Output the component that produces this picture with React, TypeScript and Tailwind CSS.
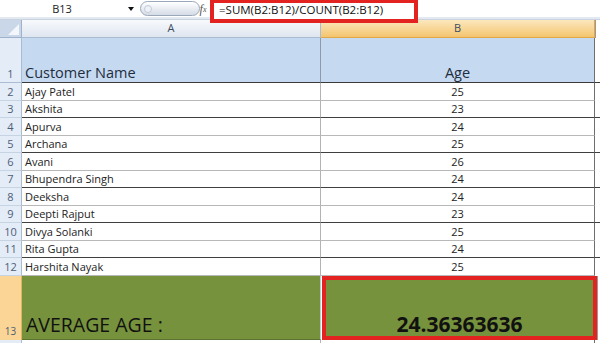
import React from "react";

const data: [string, number][] = [
  ["Ajay Patel", 25],
  ["Akshita", 23],
  ["Apurva", 24],
  ["Archana", 25],
  ["Avani", 26],
  ["Bhupendra Singh", 24],
  ["Deeksha", 24],
  ["Deepti Rajput", 23],
  ["Divya Solanki", 25],
  ["Rita Gupta", 24],
  ["Harshita Nayak", 25],
];

export default function App() {
  return (
    <div className="w-[600px] h-[343px] overflow-hidden bg-white text-black font-['Open_Sans',sans-serif]">
      {/* Formula bar */}
      <div className="flex h-[17px] items-start bg-white">
        <div className="w-[124px] h-[17px] flex items-center justify-center text-[11px] leading-none text-[#222]">
          B13
        </div>
        <div className="w-[14px] h-[17px] flex items-center justify-center">
          <svg width="6" height="4" viewBox="0 0 6 4">
            <path d="M0 0 L6 0 L3 4 Z" fill="#111" />
          </svg>
        </div>
        <div className="ml-[2px] mt-[1px] w-[60px] h-[15px] rounded-full border border-[#9aa8ba] bg-gradient-to-b from-[#ffffff] to-[#d5dce6] flex items-center pl-[3px]">
          <div className="w-[8px] h-[8px] rounded-full border border-[#c3ccd8] bg-[#eef2f7]" />
        </div>
        <div className="-ml-[3px] w-[12px] h-[17px] flex items-center justify-center font-['Liberation_Serif',serif] italic text-[#555] text-[12px] leading-none">
          f<span className="text-[8px] mt-[3px]">x</span>
        </div>
        <div className="relative z-10 ml-[1px] w-[208px] h-[23px] border-[4px] border-t-[3px] border-[#e2231f] bg-white text-[11.5px] leading-[14px] pl-[5px] text-[#111] whitespace-nowrap">
          =SUM(B2:B12)/COUNT(B2:B12)
        </div>
      </div>
      <div className="h-[3px] bg-[#e3e9f1] border-b border-[#c9d3df]" />

      {/* Column headers */}
      <div className="grid grid-cols-[22px_299px_274px_5px] h-[18px]">
        <div className="bg-[#c9d7e9] border-r border-b border-[#9eb2c9] flex items-end justify-end pr-[2px] pb-[2px]">
          <svg width="11" height="11" viewBox="0 0 11 11">
            <path d="M11 0 L11 11 L0 11 Z" fill="#f3f6fa" />
          </svg>
        </div>
        <div className="bg-gradient-to-b from-[#f7f9fc] to-[#dfe6f0] border-r border-b border-[#a9bcd2] flex items-center justify-center text-[11px] text-[#3d4c60]">
          A
        </div>
        <div className="bg-gradient-to-b from-[#fbe7bd] to-[#f4c56d] border-r border-b border-[#e2a848] flex items-center justify-center text-[11px] text-[#3d4c60]">
          B
        </div>
        <div className="bg-white border-l border-[#9a9a9a]" />
      </div>

      {/* Row 1 */}
      <div className="grid grid-cols-[22px_299px_274px_5px] h-[45px]">
        <div className="bg-[#e4ecf7] border-r border-b border-[#a9bcd2] flex items-end justify-center text-[11px] leading-[16px] text-[#4d5e77]">
          1
        </div>
        <div className="bg-[#c5d9f1] border-r border-b border-r-[#8e9aa8] border-b-[#3a3a3a] flex items-end pl-[3px] text-[14.5px] leading-[18px] text-[#1f2d3d]">
          Customer Name
        </div>
        <div className="bg-[#c5d9f1] border-r border-b border-r-[#6f6f6f] border-b-[#3a3a3a] flex items-end justify-center text-[14.5px] leading-[18px] text-[#1f2d3d]">
          Age
        </div>
        <div className="bg-white border-b border-[#3a3a3a]" />
      </div>

      {/* Data rows */}
      {data.map(([name, age], i) => {
        const n = i + 2;
        const dark = n % 2 === 1;
        return (
          <div
            key={n}
            className={`grid grid-cols-[22px_299px_274px_5px] ${i % 2 === 0 ? "h-[18px]" : "h-[17px]"}`}
          >
            <div className="bg-[#e4ecf7] border-r border-b border-r-[#a9bcd2] border-b-[#c6d3e2] flex items-end justify-center text-[11px] leading-[16px] text-[#4d5e77]">
              {n}
            </div>
            <div
              className={`bg-white border-r border-b border-r-[#b3b3b3] flex items-end pl-[3px] text-[11px] leading-[16px] text-[#222] ${dark ? "border-b-[#3f3f3f]" : "border-b-[#b8b8b8]"}`}
            >
              {name}
            </div>
            <div
              className={`bg-white border-r border-b border-r-[#6f6f6f] flex items-end justify-center text-[11px] leading-[16px] text-[#222] ${dark ? "border-b-[#3f3f3f]" : "border-b-[#b8b8b8]"}`}
            >
              {age}
            </div>
            <div className={`bg-white border-b ${dark ? "border-[#3f3f3f]" : "border-transparent"}`} />
          </div>
        );
      })}

      {/* Row 13 */}
      <div className="grid grid-cols-[22px_299px_279px] h-[64px]">
        <div className="bg-[#fbd595] border-r border-[#e2b25f] flex items-end justify-center pb-[4px] text-[10px] leading-none text-[#4d5e77]">
          13
        </div>
        <div className="bg-[#76923c] border-r border-b border-r-[#c2cad8] border-b-[#5d7330] flex items-end pl-[4px] pb-[5px] text-[19.5px] leading-none text-[#111]">
          AVERAGE AGE :
        </div>
        <div className="flex bg-white">
          <div className="ml-[1px] w-[275px] h-full border-[4px] border-[#e2231f] bg-[#76923c] flex items-end justify-center pb-[1px] text-[21px] leading-none font-bold text-[#111]">
            24.36363636
          </div>
          <div className="flex-1 border-l border-[#9a9a9a]" />
        </div>
      </div>

      {/* Row 14 partial */}
      <div className="grid grid-cols-[22px_299px_274px_5px] h-[3px]">
        <div className="bg-[#e4ecf7] border-r border-[#a9bcd2]" />
        <div className="bg-white border-r border-[#b3b3b3]" />
        <div className="bg-white border-r border-[#6f6f6f]" />
        <div className="bg-white" />
      </div>
    </div>
  );
}
